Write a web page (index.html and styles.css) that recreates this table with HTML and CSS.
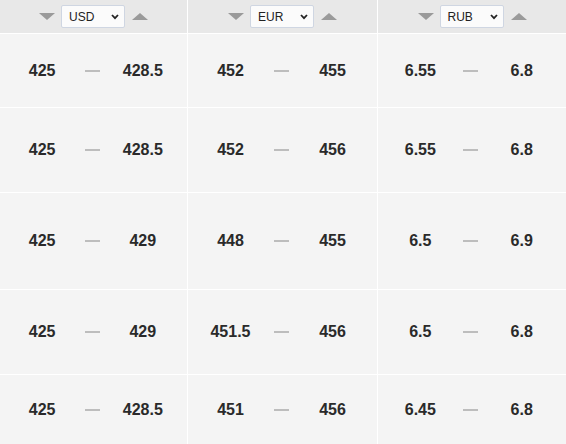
FILE: index.html
```html
<!DOCTYPE html>
<html>
<head>
<meta charset="utf-8">
<link rel="stylesheet" href="styles.css">
</head>
<body>
<div class="table">
  <div class="head">
    <span class="tri down"></span>
    <div class="sel"><span>USD</span><svg class="chev" width="8" height="6" viewBox="0 0 8 6"><path d="M1 1 L4 4.2 L7 1" fill="none" stroke="#222" stroke-width="1.8"/></svg></div>
    <span class="tri up"></span>
  </div>
  <div class="head">
    <span class="tri down"></span>
    <div class="sel"><span>EUR</span><svg class="chev" width="8" height="6" viewBox="0 0 8 6"><path d="M1 1 L4 4.2 L7 1" fill="none" stroke="#222" stroke-width="1.8"/></svg></div>
    <span class="tri up"></span>
  </div>
  <div class="head">
    <span class="tri down"></span>
    <div class="sel"><span>RUB</span><svg class="chev" width="8" height="6" viewBox="0 0 8 6"><path d="M1 1 L4 4.2 L7 1" fill="none" stroke="#222" stroke-width="1.8"/></svg></div>
    <span class="tri up"></span>
  </div>

  <div class="cell"><b>425</b><i class="dash"></i><b>428.5</b></div>
  <div class="cell"><b>452</b><i class="dash"></i><b>455</b></div>
  <div class="cell"><b>6.55</b><i class="dash"></i><b>6.8</b></div>

  <div class="cell"><b>425</b><i class="dash"></i><b>428.5</b></div>
  <div class="cell"><b>452</b><i class="dash"></i><b>456</b></div>
  <div class="cell"><b>6.55</b><i class="dash"></i><b>6.8</b></div>

  <div class="cell"><b>425</b><i class="dash"></i><b>429</b></div>
  <div class="cell"><b>448</b><i class="dash"></i><b>455</b></div>
  <div class="cell"><b>6.5</b><i class="dash"></i><b>6.9</b></div>

  <div class="cell"><b>425</b><i class="dash"></i><b>429</b></div>
  <div class="cell"><b>451.5</b><i class="dash"></i><b>456</b></div>
  <div class="cell"><b>6.5</b><i class="dash"></i><b>6.8</b></div>

  <div class="cell"><b>425</b><i class="dash"></i><b>428.5</b></div>
  <div class="cell"><b>451</b><i class="dash"></i><b>456</b></div>
  <div class="cell"><b>6.45</b><i class="dash"></i><b>6.8</b></div>
</div>
</body>
</html>
```
FILE: styles.css
```css
html, body {
  margin: 0;
  padding: 0;
  background: #f4f4f4;
  overflow: hidden;
}
body {
  font-family: "Liberation Sans", Arial, sans-serif;
}
.table {
  display: grid;
  grid-template-columns: 187px 189px 188px;
  grid-template-rows: 33px 73px 84px 96px 84px 70px;
  gap: 1px;
  background: #ffffff;
  width: 566px;
}
.head {
  background: #e8e8e8;
  display: flex;
  align-items: center;
  justify-content: center;
}
.tri {
  width: 0;
  height: 0;
  border-left: 8px solid transparent;
  border-right: 8px solid transparent;
}
.tri.down {
  border-top: 7px solid #9a9a9a;
  margin-right: 6px;
}
.tri.up {
  border-bottom: 7px solid #9a9a9a;
  margin-left: 7px;
}
.sel {
  box-sizing: border-box;
  width: 64px;
  height: 23px;
  background: #fbfbfb;
  border: 1px solid #cfd6e2;
  border-radius: 2px;
  display: flex;
  align-items: center;
  justify-content: space-between;
  padding: 0 5px 0 7px;
  font-size: 12px;
  color: #222;
}
.chev {
  display: block;
}
.cell {
  background: #f4f4f4;
  display: grid;
  grid-template-columns: 1fr 1fr 1fr;
  align-items: center;
  justify-items: center;
  padding: 0 19px 0 17px;
}
.cell b {
  font-weight: bold;
  font-size: 16px;
  color: #2a2a2a;
}
.dash {
  display: block;
  width: 15px;
  height: 2px;
  background: #bdbdbd;
}
```
